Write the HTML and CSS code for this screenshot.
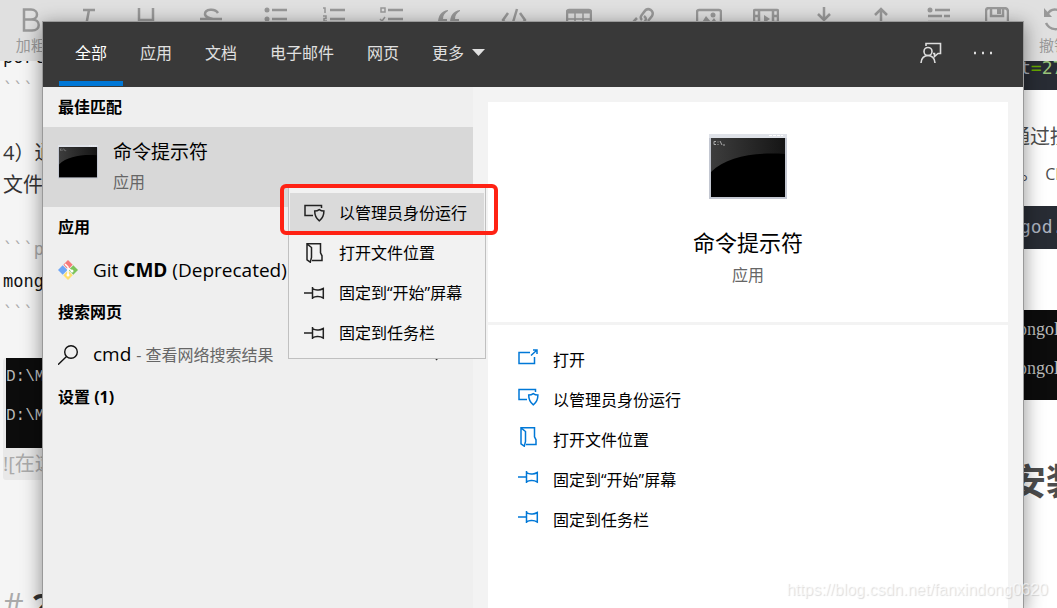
FILE: index.html
```html
<!DOCTYPE html>
<html lang="zh-CN">
<head>
<meta charset="utf-8">
<title>搜索</title>
<link rel="stylesheet" href="styles.css">
</head>
<body>
<svg class="defs" aria-hidden="true">
  <symbol id="i-admin" viewBox="0 0 21 18"><path d="M17.5 4V1.500H1v10h8"/><path d="M15.300 5.600c1.300 1 2.900 1.500 4.600 1.500 0 4.500-.9 7.200-4.600 9.700-3.700-2.500-4.600-5.200-4.600-9.700 1.700 0 3.300-.5 4.600-1.500z"/></symbol>
  <symbol id="i-file" viewBox="0 0 21 20"><path d="M3 .8h13.500v9l1.500 3v4.700H8"/><path d="M3 .8l4.500 3.700v10L6.300 19.200 3 16.800z"/></symbol>
  <symbol id="i-pin" viewBox="0 0 21 14"><path d="M0 7h8M8.500 1v12M8.500 2.500c2 1.500 4 1.800 6 1.500 2 0 3-.5 4.800-1.500v9.500c-1.800-1-2.800-1.500-4.800-1.500-2-.3-4 0-6 1.300"/></symbol>
  <symbol id="i-open" viewBox="0 0 21 16"><path d="M12 3.500H1v11h15.500V8"/><path d="M13 6.500l6-5.500M15 1h4v4"/></symbol>
  <linearGradient id="screen" x1="0" x2="1"><stop offset="0" stop-color="#3d3d3d"/><stop offset="1" stop-color="#151515"/></linearGradient>
  <symbol id="i-cmd" viewBox="0 0 78 66"><rect width="78" height="65" fill="#c3c7d1"/><path d="M0 0h78v4H0z" fill="#dfe2e8"/><path d="M60 1.500h14" stroke="#fff" stroke-dasharray="3 1"/><rect x="2" y="4" width="74" height="59" fill="#000"/><path d="M2 4h74v16C46 18 18 22 2 38z" fill="url(#screen)"/><path d="M7 7.500H5v3h2M9 7.500v1M9 10v1M11 7l2 4M14 11h2" fill="none" stroke="#aaa"/></symbol>
</svg>

<div class="app">
  <div class="toolbar">
    <button class="tool" aria-label="加粗"><svg width="24" height="26" viewBox="0 0 24 26"><path d="M5 2.500h7c8 0 8 10 0 10H5zM5 12.500h8c9 0 9 11 0 11H5z"/></svg><span>加粗</span></button>
    <button class="tool" aria-label="斜体"><svg width="24" height="26" viewBox="0 0 24 26"><path d="M7 3h12M13 3L9 24M4 24h11"/></svg></button>
    <button class="tool" aria-label="标题"><svg width="24" height="26" viewBox="0 0 24 26"><path d="M5 1v23M19 1v23M5 13h14"/></svg></button>
    <button class="tool long" aria-label="删除线"><svg width="24" height="26" viewBox="0 0 24 26"><path d="M19 6c-3-5-13-4-13 1 0 3 4 4 8 5M1 12h22M18 16c1 9-12 9-14 2"/></svg></button>
    <button class="tool" aria-label="无序"><svg width="24" height="26" viewBox="0 0 24 26"><path d="M8 3h15M8 12h15M8 21h15"/><circle class="solid" cx="3" cy="3" r="2.500"/><circle class="solid" cx="3" cy="12" r="2.500"/></svg></button>
    <button class="tool" aria-label="有序"><svg width="24" height="26" viewBox="0 0 24 26"><path d="M8 3h15M8 12h15M8 21h15"/><path d="M1 1h2v5M1 9h3v2.500H2V14h3" stroke-width="1.500"/></svg></button>
    <button class="tool" aria-label="待办"><svg width="24" height="26" viewBox="0 0 24 26"><path d="M9 3h15M9 12h15M9 21h15"/><path d="M2 1h4v4H2zM1 12l2 2 3-4" stroke-width="1.500"/></svg></button>
    <button class="tool" aria-label="引用"><svg width="24" height="26" viewBox="0 0 24 26"><path class="solid" d="M11 3C4 4 1 9 1 16v5h9v-9H6c0-4 2-6 5-8zM23 3c-7 1-10 6-10 13v5h9v-9h-4c0-4 2-6 5-8z"/></svg></button>
    <button class="tool long" aria-label="代码块"><svg width="28" height="26" viewBox="0 0 28 26"><path d="M8 6l-5 7 5 7M20 6l5 7-5 7M17 2l-6 20"/></svg></button>
    <button class="tool" aria-label="表格"><svg width="26" height="26" viewBox="0 0 26 26"><rect x="1" y="3" width="24" height="20" rx="2"/><path d="M1 5h24" stroke-width="3"/><path d="M1 12h24M1 18h24M9 5v18M17 5v18" stroke-width="1.500"/></svg></button>
    <button class="tool long" aria-label="超链接"><svg width="26" height="26" viewBox="0 0 26 26"><path d="M11 13c-3-3 0-5 2-8 4-6 11-1 8 4l-4 5M13 9c4 3 1 5-2 9-4 6-12 1-8-4l3-3"/></svg></button>
    <button class="tool" aria-label="图片"><svg width="26" height="26" viewBox="0 0 26 26"><rect x="1" y="3" width="24" height="19" rx="2"/><path class="solid" d="M3 20l7-11 5 6 3-4 6 9z"/><circle class="solid" cx="17" cy="8" r="2.500"/></svg></button>
    <button class="tool" aria-label="视频"><svg width="26" height="26" viewBox="0 0 26 26"><rect x="1" y="3" width="24" height="19" rx="1"/><path d="M6 3v19M20 3v19M1 9h5M1 15h5M20 9h5M20 15h5"/><path class="solid" d="M11 8l6 4-6 4z"/></svg></button>
    <button class="tool" aria-label="导入"><svg width="24" height="26" viewBox="0 0 24 26"><path d="M12 0v12M6 7l6 6 6-6M1 14v8h22v-8"/></svg></button>
    <button class="tool" aria-label="导出"><svg width="24" height="26" viewBox="0 0 24 26"><path d="M12 20V2M6 8l6-6 6 6M1 18v6h22v-6"/></svg></button>
    <button class="tool" aria-label="模版"><svg width="24" height="26" viewBox="0 0 24 26"><path d="M8 3h15M1 9h14M17 9h6M1 15h22"/><circle class="solid" cx="3" cy="3" r="2.500"/></svg></button>
    <button class="tool" aria-label="保存"><svg width="24" height="26" viewBox="0 0 24 26"><path d="M1 4q0-3 3-3h15q4 0 4 4v17H1zM6 2v7h12V2"/><path class="solid" d="M12 2h4v5h-4z"/></svg></button>
    <button class="tool" aria-label="撤销"><svg width="24" height="26" viewBox="0 0 24 26"><path d="M5 8c4-8 14-7 17 2M4 16c4 8 14 8 17 1"/><path class="solid" d="M2 1v9h8z"/></svg><span>撤销</span></button>
  </div>

  <div class="workspace">
    <div class="editor">
      <div class="lines">
        <div class="mono">port</div>
        <div class="mono dim">```</div>
        <br>
        <div>4）通</div>
        <div>文件</div>
        <br>
        <div class="mono dim">```p</div>
        <div class="mono">mong</div>
        <div class="mono dim">```</div>
      </div>
      <div class="shot">
        <div class="console left">D:\M<br>D:\M</div>
        <div class="dim">![在这</div>
      </div>
      <h2 class="next"><span class="dim">#</span> 2</h2>
    </div>
    <div class="preview">
      <pre class="code first">t<span class="op">=</span><span class="num">27</span></pre>
      <p>通过授</p>
      <p class="stop">。 <small>CM</small></p>
      <pre class="code">god.</pre>
      <div class="console right">ongol<br>ongol</div>
      <h1>安装</h1>
    </div>
  </div>
</div>

<main class="search">
  <header class="head">
    <nav class="tabs">
      <button class="tab active">全部</button>
      <button class="tab">应用</button>
      <button class="tab">文档</button>
      <button class="tab">电子邮件</button>
      <button class="tab">网页</button>
      <button class="tab">更多<svg width="13" height="7" viewBox="0 0 13 7"><path d="M0 0h13L6.500 7z" fill="currentColor"/></svg></button>
    </nav>
    <button class="tab-icon" aria-label="反馈"><svg width="22" height="22" viewBox="0 0 22 22"><path d="M6 4V1.500h14.500v10H18l-3.500 3v-3H13"/><circle cx="8" cy="9.500" r="4"/><path d="M1 21c0-10 14-10 14 0"/></svg></button>
    <button class="tab-icon" aria-label="选项"><svg width="20" height="4" viewBox="0 0 20 4"><path d="M1 2h2M9 2h2M17 2h2" stroke-width="2.500"/></svg></button>
  </header>
  <div class="body">
    <section class="results">
      <h3>最佳匹配</h3>
      <button class="best">
        <svg class="thumb" width="40" height="34"><use href="#i-cmd"/></svg>
        <span class="best-text"><span class="best-title">命令提示符</span><span class="muted">应用</span></span>
      </button>
      <h3>应用</h3>
      <button class="result">
        <svg width="20" height="20" viewBox="0 0 20 20"><path d="M10 0l4.700 4.700L10 9.400 5.300 4.700z" fill="#f77b7b"/><path d="M15.300 5.300L20 10l-4.700 4.700L10.600 10z" fill="#7dc35b"/><path d="M10 10.600l4.700 4.700L10 20l-4.700-4.700z" fill="#ffdf6b"/><path d="M4.700 5.300L9.400 10l-4.700 4.700L0 10z" fill="#6ea6f6"/><path d="M7 4l3 3v9M10 8l4 3" fill="none" stroke="#fff" stroke-width="1.500"/><circle cx="10" cy="15" r="1.500" fill="#fff"/><circle cx="14" cy="11" r="1.500" fill="#fff"/></svg>
        <span>Git <b>CMD</b> (Deprecated)</span>
      </button>
      <h3>搜索网页</h3>
      <button class="result">
        <svg width="20" height="20" viewBox="0 0 20 20" fill="none" stroke="#111" stroke-width="1.400"><circle cx="13" cy="7" r="6.300"/><path d="M8.500 11.500L0 19.700"/></svg>
        <span>cmd <span class="muted">- 查看网络搜索结果</span></span>
        <svg class="chevron" width="8" height="13" viewBox="0 0 8 13"><path d="M1 1l5 5.500L1 12" fill="none" stroke="#333" stroke-width="1.500"/></svg>
      </button>
      <h3>设置 (1)</h3>
    </section>
    <section class="detail">
      <div class="hero">
        <svg width="78" height="66"><use href="#i-cmd"/></svg>
        <h1 class="hero-title">命令提示符</h1>
        <div class="muted">应用</div>
      </div>
      <div class="actions">
        <button class="action"><svg width="21" height="16"><use href="#i-open"/></svg>打开</button>
        <button class="action"><svg width="21" height="18"><use href="#i-admin"/></svg>以管理员身份运行</button>
        <button class="action"><svg width="21" height="20"><use href="#i-file"/></svg>打开文件位置</button>
        <button class="action"><svg width="21" height="14"><use href="#i-pin"/></svg>固定到<span class="latin">“</span>开始<span class="latin">”</span>屏幕</button>
        <button class="action"><svg width="21" height="14"><use href="#i-pin"/></svg>固定到任务栏</button>
      </div>
    </section>
  </div>
  <div class="menu">
    <button class="menu-item hot"><svg width="21" height="18"><use href="#i-admin"/></svg>以管理员身份运行</button>
    <button class="menu-item"><svg width="21" height="20"><use href="#i-file"/></svg>打开文件位置</button>
    <button class="menu-item"><svg width="21" height="14"><use href="#i-pin"/></svg>固定到<span class="latin">“</span>开始<span class="latin">”</span>屏幕</button>
    <button class="menu-item"><svg width="21" height="14"><use href="#i-pin"/></svg>固定到任务栏</button>
  </div>
  <div class="marker"></div>
</main>
<div class="watermark">https://blog.csdn.net/fanxindong0620</div>
</body>
</html>
```
FILE: styles.css
```css
* { box-sizing: border-box; }
body {
  margin: 0;
  height: 100vh;
  overflow: hidden;
  position: relative;
  font: 16px/24px "Open Sans", "Noto Sans CJK SC", sans-serif;
  color: #000;
}
h1, h2, h3, p, pre { margin: 0; }
button {
  border: 0;
  padding: 0;
  background: none;
  font: inherit;
  color: inherit;
  text-align: left;
}
.defs { position: absolute; width: 0; height: 0; }

/* editor behind the search window */
.app { height: 100%; display: flex; flex-direction: column; overflow: hidden; background: #f5f5f5; }
.toolbar {
  position: relative;
  z-index: 1;
  flex: none;
  height: 61px;
  display: flex;
  margin-right: -26px;
  padding-left: 2px;
  background: #e0e0e0;
  color: #999;
}
.tool { flex: 23 0 0; display: flex; flex-direction: column; align-items: center; padding-top: 7px; font-size: 15px; }
.tool.long { flex-grow: 29; }
.tool svg { fill: none; stroke: #999; stroke-width: 2.500; }
.tool .solid { fill: #999; stroke: none; }
.workspace { flex: 1; min-height: 0; display: flex; }
.editor { flex: 1; padding-left: 3px; font-size: 20px; line-height: 32px; color: #333; }
.lines { margin-top: -20px; height: 317px; }
.mono { font-family: "DejaVu Sans Mono", monospace; font-size: 17px; color: #111; }
.dim { color: #aaa; font-weight: 400; }
.shot { width: 300px; background: #e8e8e8; border-radius: 3px; }
.console { height: 90px; background: #0c0c0c; color: #bbb; line-height: 39px; }
.console.left { margin-left: 3px; font-family: "Liberation Mono", monospace; font-size: 16px; }
.console.right { margin-top: 61px; padding-left: 8px; font-family: "Liberation Serif", serif; font-size: 18px; }
.next { margin-top: 105px; font-size: 32px; line-height: 40px; }
.preview { width: 47px; background: #fff; overflow: hidden; font-size: 20px; line-height: 36px; color: #4d4d4d; white-space: nowrap; }
.code {
  height: 43px;
  margin-top: 14px;
  padding-left: 10px;
  background: #282c34;
  color: #abb2bf;
  font: 18px/42px "DejaVu Sans Mono", monospace;
}
.code.first { height: 29px; margin: 0 0 29px; line-height: 14px; }
.op { color: #67a800; }
.num { color: #98c379; }
.stop { padding-left: 10px; }
.stop small { font-size: 16px; }
.preview h1 { margin-top: 60px; font-size: 36px; line-height: 44px; }

/* search window */
.search {
  position: absolute;
  z-index: 2;
  top: 22px;
  right: 34px;
  bottom: 0;
  left: 43px;
  display: flex;
  flex-direction: column;
  box-shadow: 0 0 0 1px #999, 0 4px 18px 2px rgba(0, 0, 0, .4);
}
.head { flex: none; height: 65px; display: flex; padding: 0 20px 0 16px; background: #393939; color: #e0e0e0; }
.tabs { flex: 1; display: flex; gap: 1px; }
.tab { display: flex; align-items: center; gap: 8px; margin-bottom: 1px; padding: 2px 16px 5px; }
.tab.active { color: #fff; padding-bottom: 0; border-bottom: 5px solid #0078d7; }
.tab-icon { width: 40px; margin-left: 12px; padding-bottom: 3px; display: flex; align-items: center; justify-content: center; }
.tab-icon svg { fill: none; stroke: #ddd; stroke-width: 1.600; }
.body { flex: 1; min-height: 0; display: flex; background: #f3f3f3; }
.results { width: 430px; flex: none; background: #efefef; }
.results h3 { padding-left: 15px; font-size: 16px; line-height: 40px; font-weight: 700; }
.best { width: 100%; height: 80px; display: flex; align-items: center; gap: 15px; padding: 0 15px; background: #d8d8d8; }
.thumb { margin-bottom: 10px; }
.best-text { display: flex; flex-direction: column; gap: 6px; }
.best-title { font-size: 19px; }
.muted { font-size: 16px; color: #666; }
.result { width: 100%; height: 45px; display: flex; align-items: center; gap: 15px; padding: 0 30px 0 15px; font-size: 19px; }
.chevron { margin-left: auto; }
.detail { flex: 1; display: flex; flex-direction: column; gap: 3px; padding: 15px 15px 0; }
.hero { height: 220px; display: flex; flex-direction: column; align-items: center; padding-top: 32px; background: #fff; }
.hero-title { margin: 26px 0 5px; font-size: 22px; line-height: 32px; font-weight: 400; }
.actions { flex: 1; padding: 15px 30px; background: #fff; }
.action, .menu-item { width: 100%; height: 40px; display: flex; align-items: center; }
.action svg, .menu-item svg { margin-right: 14px; fill: none; stroke: #222; stroke-width: 1.500; }
.action svg { margin-bottom: 6px; stroke: #0078d7; }
.latin { font-family: "Open Sans", sans-serif; }
.menu {
  position: absolute;
  top: 165px;
  left: 245px;
  width: 198px;
  padding: 5px 1px;
  background: #f2f2f2;
  border: 1px solid #c0c0c0;
}
.menu-item { padding-left: 14px; }
.menu-item.hot { background: #dadada; }
.marker {
  position: absolute;
  top: 162px;
  left: 237px;
  width: 218px;
  height: 51px;
  border: 4px solid #ff2214;
  border-radius: 6px;
}
.watermark {
  position: absolute;
  z-index: 3;
  right: 9px;
  bottom: 6px;
  font-family: "Liberation Sans", sans-serif;
  font-size: 16px;
  color: rgba(255, 255, 255, .6);
  text-shadow: 1px 1px 1px rgba(0, 0, 0, .14);
}
```
